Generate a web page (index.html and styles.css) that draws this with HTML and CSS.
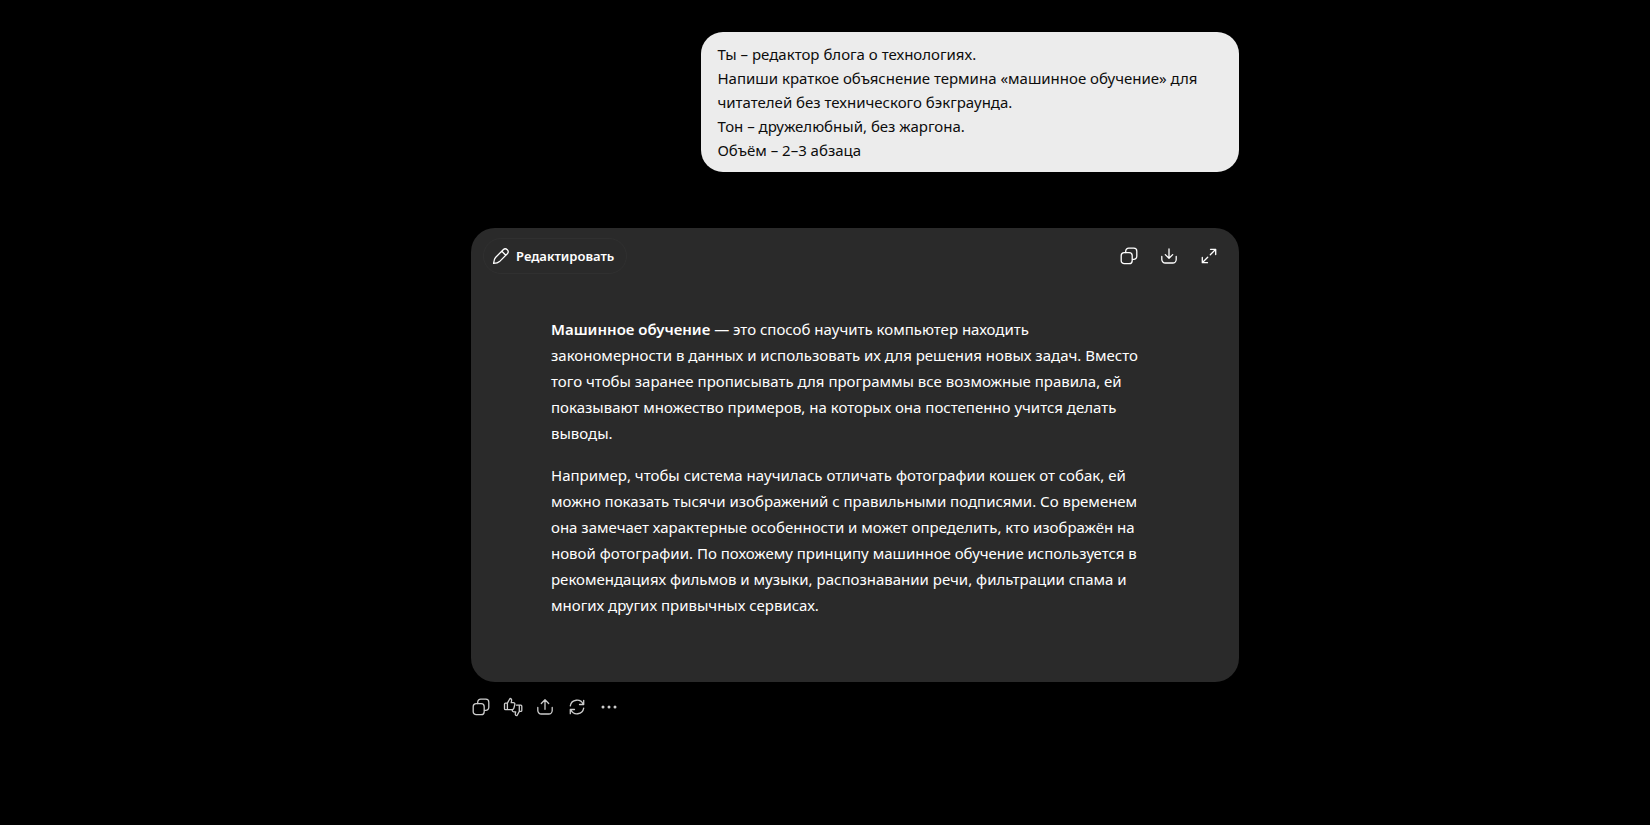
FILE: index.html
```html
<!DOCTYPE html>
<html lang="ru">
<head>
    <meta charset="UTF-8">
    <meta name="viewport" content="width=device-width, initial-scale=1.0">
    <title>Машинное обучение</title>
    <link rel="stylesheet" href="styles.css">
</head>
<body>
    <main class="chat">
        <div class="message">
            Ты – редактор блога о технологиях.<br>
            Напиши краткое объяснение термина «машинное обучение» для<br>
            читателей без технического бэкграунда.<br>
            Тон – дружелюбный, без жаргона.<br>
            Объём – 2–3 абзаца
        </div>

        <article class="card">
            <div class="toolbar">
                <button class="edit" type="button">
                    <svg class="icon" viewBox="0 0 20 20"><path d="M2.6 17.4c.2-2.500.6-4.500 1.900-5.900L12.200 3.700a2.900 2.900 0 0 1 4.100 4.100L8.500 15.600c-1.400 1.300-3.400 1.700-5.900 1.800ZM10.800 5.200l4 4"/></svg>
                    Редактировать
                </button>
                <div class="tools">
                    <button type="button" aria-label="Копировать">
                        <svg class="icon" viewBox="0 0 20 20"><rect x="2.200" y="6.700" width="11" height="11" rx="3"/><path d="M6.700 6.500v-1.300a3 3 0 0 1 3-3h5.100a3 3 0 0 1 3 3v5.100a3 3 0 0 1-3 3h-1.300"/></svg>
                    </button>
                    <button type="button" aria-label="Скачать">
                        <svg class="icon" viewBox="0 0 20 20"><path d="M10 3v9M6.300 8.600 10 12.300l3.700-3.700M2.800 10.500v3a3.500 3.500 0 0 0 3.500 3.500h7.400a3.500 3.500 0 0 0 3.500-3.500v-3"/></svg>
                    </button>
                    <button type="button" aria-label="Развернуть">
                        <svg class="icon" viewBox="0 0 20 20"><path d="M11.500 3.300h5.200v5.200M16.500 3.500 11.300 8.700M8.500 16.700H3.300v-5.200M3.500 16.500l5.200-5.200"/></svg>
                    </button>
                </div>
            </div>
            <div class="text">
                <p><strong>Машинное обучение</strong> — это способ научить компьютер находить<br> закономерности в данных и использовать их для решения новых задач. Вместо<br> того чтобы заранее прописывать для программы все возможные правила, ей<br> показывают множество примеров, на которых она постепенно учится делать<br> выводы.</p>
                <p>Например, чтобы система научилась отличать фотографии кошек от собак, ей можно показать тысячи изображений с правильными подписями. Со временем она замечает характерные особенности и может определить, кто изображён на новой фотографии. По похожему принципу машинное обучение используется в рекомендациях фильмов и музыки, распознавании речи, фильтрации спама и многих других привычных сервисах.</p>
            </div>
        </article>

        <div class="actions">
            <button type="button" aria-label="Копировать">
                <svg class="icon" viewBox="0 0 20 20"><rect x="2.200" y="6.700" width="11" height="11" rx="3"/><path d="M6.700 6.500v-1.300a3 3 0 0 1 3-3h5.100a3 3 0 0 1 3 3v5.100a3 3 0 0 1-3 3h-1.300"/></svg>
            </button>
            <button type="button" aria-label="Оценить">
                <svg class="icon" viewBox="0 0 20 20"><path d="M4.400 6.100H2.500a1 1 0 0 0-1 1v4.600a1 1 0 0 0 1 1h1.900ZM4.400 6.100 7 1.500c1.200.1 1.800.9 1.600 2L8.200 5.600h2.100a1.500 1.500 0 0 1 1.500 1.900l-.9 3.700a2 2 0 0 1-2 1.500H4.400"/><path d="M16.300 8.200h1.500a1 1 0 0 1 1 1v4.200a1 1 0 0 1-1 1h-1.500ZM13.500 8.200h2.800M16.300 14.400l-2.400 4.300c-1.200-.1-1.800-.9-1.600-2l.4-1.900h-2.100a1.400 1.400 0 0 1-1.300-1.800"/></svg>
            </button>
            <button type="button" aria-label="Поделиться">
                <svg class="icon" viewBox="0 0 20 20"><path d="M10 12.300V3M6.300 6.500 10 2.800l3.700 3.700M2.800 10.500v3a3.500 3.500 0 0 0 3.500 3.500h7.400a3.500 3.500 0 0 0 3.500-3.500v-3"/></svg>
            </button>
            <button type="button" aria-label="Повторить">
                <svg class="icon" viewBox="0 0 20 20"><path d="M3.300 8.800a6.800 6.800 0 0 1 12.900-1.600M16.700 3.300v4.200h-4.200M16.700 11.200a6.800 6.800 0 0 1-12.900 1.600M3.300 16.700v-4.200h4.200"/></svg>
            </button>
            <button type="button" aria-label="Ещё">
                <svg class="icon dots" viewBox="0 0 20 20"><circle cx="4" cy="10" r="1.500"/><circle cx="10" cy="10" r="1.500"/><circle cx="16" cy="10" r="1.500"/></svg>
            </button>
        </div>
    </main>
</body>
</html>
```
FILE: styles.css
```css
* {
    box-sizing: border-box;
}
body {
    margin: 0;
    padding: 32px 0 32px 60px;
    background-color: #000;
    color: #fff;
    font-family: 'Segoe UI', 'Noto Sans', sans-serif;
    font-size: 15px;
}
.chat {
    max-width: 768px;
    margin: 0 auto;
    display: flex;
    flex-direction: column;
}
.message {
    align-self: flex-end;
    width: 70%;
    padding: 10px 16px;
    border-radius: 22px;
    background-color: #ececec;
    color: #0d0d0d;
    line-height: 24px;
}
.card {
    margin-top: 56px;
    border-radius: 24px;
    background-color: #2a2a2a;
}
.toolbar {
    display: flex;
    align-items: center;
    justify-content: space-between;
    padding: 10px 12px;
}
.tools {
    display: flex;
    gap: 4px;
}
button {
    display: flex;
    align-items: center;
    justify-content: center;
    padding: 0;
    border: none;
    background: none;
    color: inherit;
    font-family: inherit;
    cursor: pointer;
}
.tools button {
    width: 36px;
    height: 36px;
}
.edit {
    height: 36px;
    padding: 0 12px 0 7px;
    gap: 5px;
    border: 1px solid #303030;
    border-radius: 18px;
    font-size: 13px;
    font-weight: 600;
}
.icon {
    width: 20px;
    height: 20px;
    fill: none;
    stroke: currentColor;
    stroke-width: 1.3;
    stroke-linecap: round;
    stroke-linejoin: round;
}
.dots {
    fill: currentColor;
    stroke: none;
}
.text {
    padding: 32px 80px 64px;
    line-height: 26px;
}
.text p {
    margin: 0 0 16px;
}
.text p:last-child {
    margin-bottom: 0;
}
.text strong {
    font-weight: 600;
}
.actions {
    display: flex;
    margin: 9px 0 0 -6px;
    color: #cdcdcd;
}
.actions button {
    width: 32px;
    height: 32px;
}
```
